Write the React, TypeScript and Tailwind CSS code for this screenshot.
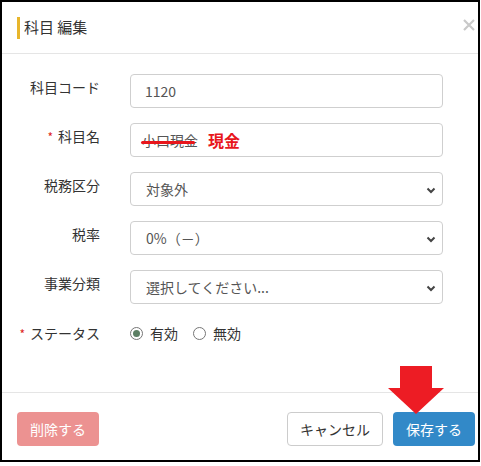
import React from "react";

const FONT = { fontFamily: '"Noto Sans CJK JP", "Noto Sans", sans-serif' };

function Label({ text, required }: { text: string; required?: boolean }) {
  return (
    <div className="w-[98px] shrink-0 pt-[3px] text-right text-[14px] leading-[20px] text-[#333]">
      {required && <span className="mr-[5px] text-[12px] text-[#dd2222]">*</span>}
      {text}
    </div>
  );
}

function Chevron() {
  return (
    <svg width="10" height="7" viewBox="0 0 10 7" className="absolute right-[6px] top-[14px]">
      <path d="M1.5 1.5 L5 5 L8.5 1.5" fill="none" stroke="#444" strokeWidth="2" />
    </svg>
  );
}

function Select({ value }: { value: string }) {
  return (
    <div className="relative h-[34px] w-[313px] rounded-[4px] border border-[#cfcfcf] bg-white pl-[15px] text-[14px] leading-[32px] text-[#555]">
      {value}
      <Chevron />
    </div>
  );
}

function Row({ children }: { children: React.ReactNode }) {
  return <div className="flex items-start gap-[30px]">{children}</div>;
}

function Radio({ checked, label }: { checked?: boolean; label: string }) {
  return (
    <div className="flex items-center gap-[7px]">
      <span className="flex h-[13px] w-[13px] items-center justify-center rounded-full border border-[#767676] bg-white">
        {checked && <span className="h-[7px] w-[7px] rounded-full bg-[#5c7f64]" />}
      </span>
      <span>{label}</span>
    </div>
  );
}

export default function App() {
  return (
    <div className="relative h-[466px] w-[481px] bg-white" style={FONT}>
      <div className="flex h-[462px] w-[480px] flex-col border-2 border-black">
        <div className="flex h-[52px] items-center border-b border-[#e5e5e5] pl-[15px] pr-[3px]">
          <span className="mr-[4px] h-[22px] w-[3px] bg-[#e8b62c]" />
          <span className="text-[15px] text-[#333]">科目 編集</span>
          <svg width="12" height="12" viewBox="0 0 12 12" className="ml-auto -mt-[5px]">
            <path d="M1 1 L11 11 M11 1 L1 11" stroke="#c9c9c9" strokeWidth="2.2" />
          </svg>
        </div>

        <div className="flex flex-1 flex-col gap-[15px] pt-[20px]">
          <Row>
            <Label text="科目コード" />
            <div className="h-[34px] w-[313px] rounded-[4px] border border-[#cfcfcf] pl-[14px] text-[14px] leading-[32px] text-[#555]">
              1120
            </div>
          </Row>
          <Row>
            <Label text="科目名" required />
            <div className="flex h-[34px] w-[313px] items-center rounded-[4px] border border-[#cfcfcf] pl-[11px] text-[14px] text-[#555]">
              <span className="relative">
                小口現金
                <span className="absolute left-[-1px] right-[3px] top-[11px] h-[3px] rounded-full bg-[#e8161c]" />
              </span>
              <span className="ml-[10px] text-[16px] font-bold text-[#e8161c]">現金</span>
            </div>
          </Row>
          <Row>
            <Label text="税務区分" />
            <Select value="対象外" />
          </Row>
          <Row>
            <Label text="税率" />
            <Select value="0%（－）" />
          </Row>
          <Row>
            <Label text="事業分類" />
            <Select value="選択してください..." />
          </Row>
          <div className="flex items-center gap-[30px] pt-[4px]">
            <div className="w-[98px] shrink-0 text-right text-[14px] leading-[20px] text-[#333]">
              <span className="mr-[5px] text-[12px] text-[#dd2222]">*</span>
              ステータス
            </div>
            <div className="flex items-center gap-[15px] text-[14px] text-[#333]">
              <Radio checked label="有効" />
              <Radio label="無効" />
            </div>
          </div>
        </div>

        <div className="flex h-[68px] items-start border-t border-[#e5e5e5] pl-[15px] pr-[3px] pt-[19px]">
          <button className="h-[34px] w-[82px] rounded-[4px] bg-[#ec9291] text-[14px] text-white">
            削除する
          </button>
          <button className="ml-auto h-[34px] w-[96px] rounded-[4px] border border-[#cccccc] bg-white text-[14px] text-[#333]">
            キャンセル
          </button>
          <button className="ml-[10px] h-[34px] w-[82px] rounded-[4px] bg-[#3289c8] text-[14px] text-white">
            保存する
          </button>
        </div>
      </div>

      <svg width="58" height="49" viewBox="0 0 58 49" className="absolute left-[387px] top-[366px]">
        <path d="M13 0 H45 V22 H57 L29 48 L1 22 H13 Z" fill="#ed1c24" />
      </svg>
    </div>
  );
}
